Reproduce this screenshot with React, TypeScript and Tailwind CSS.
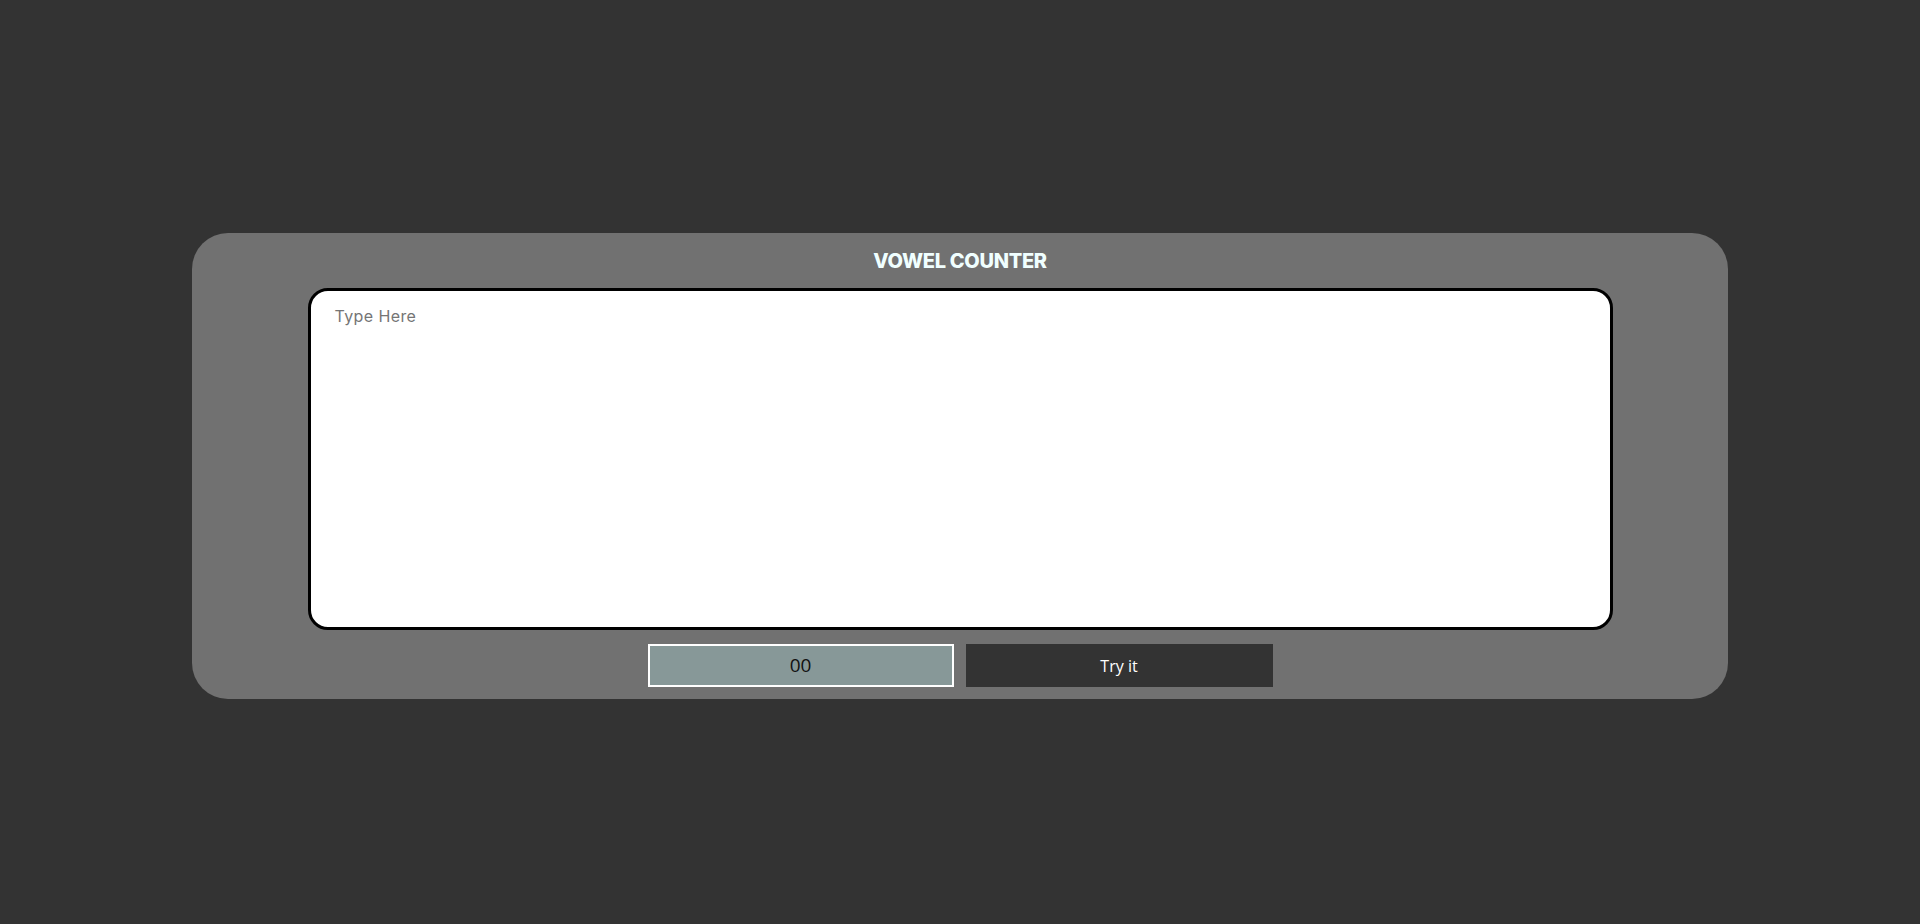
import React, { useState } from "react";

export default function App() {
  const [text, setText] = useState("");
  const [count, setCount] = useState("00");

  const countVowels = () => {
    const n = (text.match(/[aeiou]/gi) || []).length;
    setCount(n < 10 ? "0" + n : String(n));
  };

  return (
    <div className="min-h-[924px] w-full bg-[#333333] pt-[233px]">
      <div className="mx-auto flex w-[1536px] flex-col items-center rounded-[36px] bg-[#717171] pt-[14px] pb-[12px]">
        <h1 className="h-[28px] text-[20px] font-extrabold leading-[28px] tracking-[-0.3px] text-[#f0ffff] [font-family:Inter,'Open_Sans',sans-serif]">
          VOWEL COUNTER
        </h1>
        <textarea
          value={text}
          onChange={(e) => setText(e.target.value)}
          placeholder="Type Here"
          className="mt-[13px] h-[342px] w-[1305px] resize-none rounded-[20px] border-[3px] border-black bg-white px-[24px] pt-[13px] text-[16px] leading-[24px] tracking-[0.4px] text-black outline-none placeholder:text-[#757575] [font-family:Inter,'Open_Sans',sans-serif]"
        />
        <div className="mt-[14px] flex gap-[12px]">
          <div className="flex h-[43px] w-[306px] items-center justify-center border-2 border-white bg-[#879898] text-[19px] text-[#111111] [font-family:'Open_Sans','Noto_Sans',sans-serif]">
            {count}
          </div>
          <button
            onClick={countVowels}
            className="flex h-[43px] w-[307px] items-center justify-center bg-[#333333] text-[16px] text-white [font-family:'Open_Sans','Noto_Sans',sans-serif]"
          >
            Try it
          </button>
        </div>
      </div>
    </div>
  );
}
